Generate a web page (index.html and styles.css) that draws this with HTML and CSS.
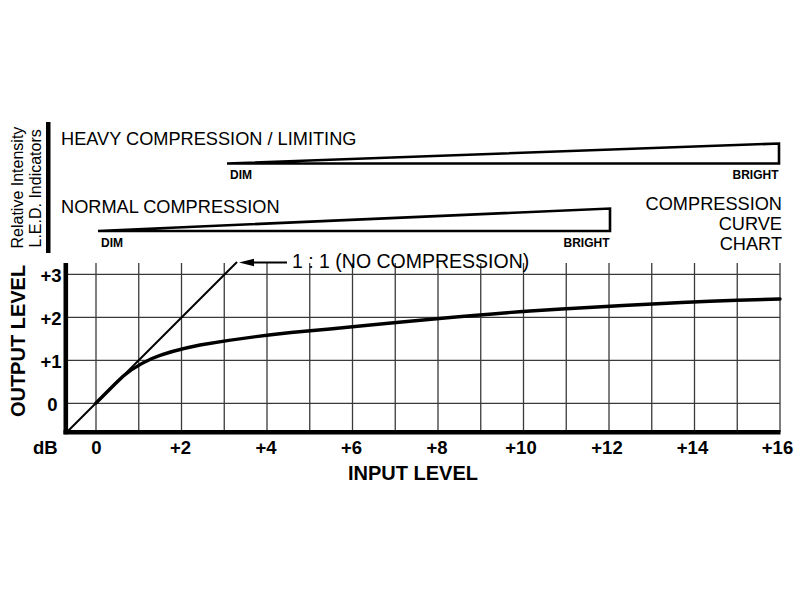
FILE: index.html
```html
<!DOCTYPE html>
<html lang="en">
<head>
<meta charset="utf-8">
<title>Compression Curve Chart</title>
<link rel="stylesheet" href="styles.css">
</head>
<body>
<main class="page">
<svg class="chart" width="800" height="600" viewBox="0 0 800 600" xmlns="http://www.w3.org/2000/svg">
  <!-- LED intensity section -->
  <rect class="bar" x="46" y="122" width="4.5" height="131"/>
  <text class="side" transform="translate(22.5 248.5) rotate(-90)">Relative Intensity</text>
  <text class="side" transform="translate(40.5 247.5) rotate(-90)">L.E.D. Indicators</text>

  <text class="label" x="61" y="145">HEAVY COMPRESSION / LIMITING</text>
  <polygon class="wedge" points="227,163.5 779,143.5 779,163.5"/>
  <text class="tiny" x="230" y="179">DIM</text>
  <text class="tiny end" x="778.5" y="179">BRIGHT</text>

  <text class="label" x="61" y="212.5">NORMAL COMPRESSION</text>
  <polygon class="wedge" points="98,231 610,208.5 610,231"/>
  <text class="tiny" x="101" y="247">DIM</text>
  <text class="tiny end" x="609.5" y="247">BRIGHT</text>

  <text class="label end" x="782" y="210">COMPRESSION</text>
  <text class="label end" x="782" y="230">CURVE</text>
  <text class="label end" x="782" y="249.5">CHART</text>

  <!-- grid -->
  <g class="grid">
    <line x1="96" y1="263" x2="96" y2="432"/>
    <line x1="138.75" y1="263" x2="138.75" y2="432"/>
    <line x1="181.5" y1="263" x2="181.5" y2="432"/>
    <line x1="224.25" y1="263" x2="224.25" y2="432"/>
    <line x1="267" y1="263" x2="267" y2="432"/>
    <line x1="309.75" y1="263" x2="309.75" y2="432"/>
    <line x1="352.5" y1="263" x2="352.5" y2="432"/>
    <line x1="395.25" y1="263" x2="395.25" y2="432"/>
    <line x1="438" y1="263" x2="438" y2="432"/>
    <line x1="480.75" y1="263" x2="480.75" y2="432"/>
    <line x1="523.5" y1="263" x2="523.5" y2="432"/>
    <line x1="566.25" y1="263" x2="566.25" y2="432"/>
    <line x1="609" y1="263" x2="609" y2="432"/>
    <line x1="651.75" y1="263" x2="651.75" y2="432"/>
    <line x1="694.5" y1="263" x2="694.5" y2="432"/>
    <line x1="737.25" y1="263" x2="737.25" y2="432"/>
    <line x1="780" y1="263" x2="780" y2="432"/>
    <line x1="66" y1="274.3" x2="780" y2="274.3"/>
    <line x1="66" y1="317.3" x2="780" y2="317.3"/>
    <line x1="66" y1="360.3" x2="780" y2="360.3"/>
    <line x1="66" y1="403.3" x2="780" y2="403.3"/>
  </g>

  <!-- axes -->
  <line class="axis" x1="65.8" y1="263" x2="65.8" y2="434.2"/>
  <line class="axis" x1="63.5" y1="432.3" x2="780.5" y2="432.3"/>

  <!-- 1:1 line and arrow -->
  <line class="unity" x1="66" y1="433" x2="237" y2="262"/>
  <line class="unity" x1="250" y1="262.5" x2="287" y2="262.5"/>
  <polygon class="head" points="239,262.5 254,258.8 254,266.2"/>
  <text class="note" x="292" y="267.5">1 : 1 (NO COMPRESSION)</text>

  <!-- compression curve -->
  <path class="curve" d="M96 403 L116 383 C125 373.5 135 366 152 358.5 C166 352.5 180 349 200 345 C240 338 280 333 330 329 C400 322 460 316 530 311 C620 305 700 301 780 299"/>

  <!-- y labels -->
  <text class="num end" x="61.5" y="281.5">+3</text>
  <text class="num end" x="61.5" y="324.5">+2</text>
  <text class="num end" x="61.5" y="367.5">+1</text>
  <text class="num end" x="57.5" y="410.5">0</text>
  <text class="axtitle mid" transform="translate(25 341) rotate(-90)">OUTPUT LEVEL</text>

  <!-- x labels -->
  <text class="num" x="33" y="454">dB</text>
  <text class="num mid" x="96.5" y="454">0</text>
  <text class="num mid" x="180.5" y="454">+2</text>
  <text class="num mid" x="266" y="454">+4</text>
  <text class="num mid" x="351.5" y="454">+6</text>
  <text class="num mid" x="437" y="454">+8</text>
  <text class="num mid" x="521" y="454">+10</text>
  <text class="num mid" x="607" y="454">+12</text>
  <text class="num mid" x="692.5" y="454">+14</text>
  <text class="num mid" x="777.5" y="454">+16</text>
  <text class="axtitle" x="348" y="479.5">INPUT LEVEL</text>
</svg>
</main>
</body>
</html>
```

FILE: styles.css
```css
html, body {
  margin: 0;
  padding: 0;
  background: #ffffff;
}

.page {
  width: 800px;
  height: 600px;
  overflow: hidden;
}

.chart {
  display: block;
  font-family: "Liberation Sans", Arial, sans-serif;
}

.chart text {
  fill: #000000;
}

.bar {
  fill: #000000;
}

.side {
  font-size: 16px;
}

.label {
  font-size: 18.2px;
}

.tiny {
  font-size: 12px;
  font-weight: bold;
}

.note {
  font-size: 19.5px;
}

.num {
  font-size: 18.5px;
  font-weight: bold;
}

.axtitle {
  font-size: 20px;
  font-weight: bold;
}

.end {
  text-anchor: end;
}

.mid {
  text-anchor: middle;
}

.wedge {
  fill: #ffffff;
  stroke: #000000;
  stroke-width: 2.6;
  stroke-linejoin: miter;
}

.grid line {
  stroke: #3a3a3a;
  stroke-width: 1.3;
}

.axis {
  stroke: #000000;
  stroke-width: 4.6;
}

.unity {
  stroke: #000000;
  stroke-width: 2;
}

.head {
  fill: #000000;
}

.curve {
  fill: none;
  stroke: #000000;
  stroke-width: 3.4;
  stroke-linecap: round;
  stroke-linejoin: round;
}
```
